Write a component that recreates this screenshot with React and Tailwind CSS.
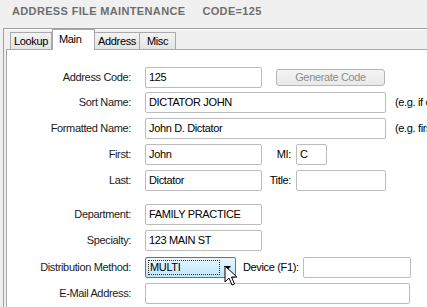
import React from "react";

const font = { fontFamily: '"Liberation Sans", Arial, sans-serif' };

const Box = ({ w, value, className = "" }) => (
  <div
    className={`h-[21px] shrink-0 bg-white border border-[#bcbcbc] rounded-[2px] pl-[3px] flex items-center text-[11px] text-black whitespace-nowrap overflow-hidden ${w} ${className}`}
  >
    {value}
  </div>
);

const Label = ({ children }) => (
  <div className="w-[125px] shrink-0 text-right pr-[1px] text-[11px] text-[#1a1a1a] whitespace-nowrap">{children}</div>
);

const Row = ({ label, mt, children }) => (
  <div className={`flex items-center h-[21px] ${mt}`}>
    <Label>{label}</Label>
    <div className="ml-[13px] flex items-center">{children}</div>
  </div>
);

const Tab = ({ children, active, w }) =>
  active ? (
    <div className={`h-[21px] -mb-[1px] bg-white border border-b-0 border-[#a9a9a9] pl-[6px] pt-[1px] text-[11px] text-black z-10 ${w}`}>
      {children}
    </div>
  ) : (
    <div className={`h-[17px] bg-gradient-to-b from-[#f2f2f2] to-[#e4e4e4] border border-b-0 border-[#a9a9a9] -ml-[1px] flex items-center justify-center text-[11px] text-black ${w}`}>
      {children}
    </div>
  );

const Cursor = () => (
  <svg className="absolute left-[224px] top-[265px]" width="14" height="22" viewBox="0 0 14 22">
    <path d="M1 1 L1 17 L5 13 L8 20 L10.5 19 L7.5 12 L13 12 Z" fill="#fff" stroke="#000" strokeWidth="1" strokeLinejoin="round" />
  </svg>
);

export default function App() {
  return (
    <div className="w-[427px] h-[307px] bg-[#f0f0f0] overflow-hidden relative tracking-[-0.35px]" style={font}>
      {/* title */}
      <div className="h-[28px] pl-[12px] pt-[5px] flex text-[11px] leading-[13px] font-bold text-[#6e6e6e] tracking-[0.35px] whitespace-nowrap">
        <span>ADDRESS FILE MAINTENANCE</span>
        <span className="ml-[17px]">CODE=125</span>
      </div>

      {/* frame */}
      <div className="ml-[3px] border-t border-l border-[#a0a0a0] h-[279px] flex flex-col">
        <div className="border-t border-white h-[20px] flex items-end pl-[7px]">
          <Tab w="w-[42px]">Lookup</Tab>
          <Tab active w="w-[43px]">Main</Tab>
          <Tab w="w-[46px]">Address</Tab>
          <Tab w="w-[37px]">Misc</Tab>
        </div>

        <div className="ml-[2px] flex-1 bg-white border-t border-l border-[#a9a9a9] pt-[17px]">
          <Row label="Address Code:" mt="">
            <Box w="w-[117px]" value="125" />
            <div className="ml-[14px] w-[109px] h-[17px] border border-[#b5b5b5] rounded-[3px] bg-gradient-to-b from-[#f4f4f4] to-[#e9e9e9] flex items-center justify-center text-[11px] text-[#8d8d8d]">
              Generate Code
            </div>
          </Row>
          <Row label="Sort Name:" mt="mt-[4px]">
            <Box w="w-[241px]" value="DICTATOR JOHN" />
            <span className="ml-[9px] text-[11px] whitespace-nowrap">(e.g. if company)</span>
          </Row>
          <Row label="Formatted Name:" mt="mt-[5px]">
            <Box w="w-[241px]" value="John D. Dictator" />
            <span className="ml-[9px] text-[11px] whitespace-nowrap">(e.g. first last)</span>
          </Row>
          <Row label="First:" mt="mt-[5px]">
            <Box w="w-[117px]" value="John" />
            <div className="w-[29px] text-right text-[11px]">MI:</div>
            <Box w="w-[31px]" value="C" className="ml-[5px]" />
          </Row>
          <Row label="Last:" mt="mt-[5px]">
            <Box w="w-[117px]" value="Dictator" />
            <div className="w-[29px] text-right text-[11px]">Title:</div>
            <Box w="w-[90px]" value="" className="ml-[5px]" />
          </Row>
          <Row label="Department:" mt="mt-[13px]">
            <Box w="w-[117px]" value="FAMILY PRACTICE" />
          </Row>
          <Row label="Specialty:" mt="mt-[5px]">
            <Box w="w-[117px]" value="123 MAIN ST" />
          </Row>
          <Row label="Distribution Method:" mt="mt-[6px]">
            <div className="w-[91px] h-[21px] border border-[#3c7fb1] rounded-[2px] bg-gradient-to-b from-[#eaf6fd] to-[#bee6fd] flex items-center pl-[2px] pr-[1px]">
              <div className="flex-1 h-[15px] border border-dotted border-[#333] flex items-center pl-[1px] text-[11px] text-black">MULTI</div>
              <div className="w-[14px] h-full flex items-center justify-center">
                <svg width="7" height="4" viewBox="0 0 7 4">
                  <path d="M0 0 H7 L3.5 4 Z" fill="#000" />
                </svg>
              </div>
            </div>
            <span className="ml-[7px] text-[11px] whitespace-nowrap">Device (F1):</span>
            <Box w="w-[108px]" value="" className="ml-[4px]" />
          </Row>
          <Row label="E-Mail Address:" mt="mt-[5px]">
            <Box w="w-[265px]" value="" />
          </Row>
        </div>
      </div>
      <Cursor />
    </div>
  );
}
